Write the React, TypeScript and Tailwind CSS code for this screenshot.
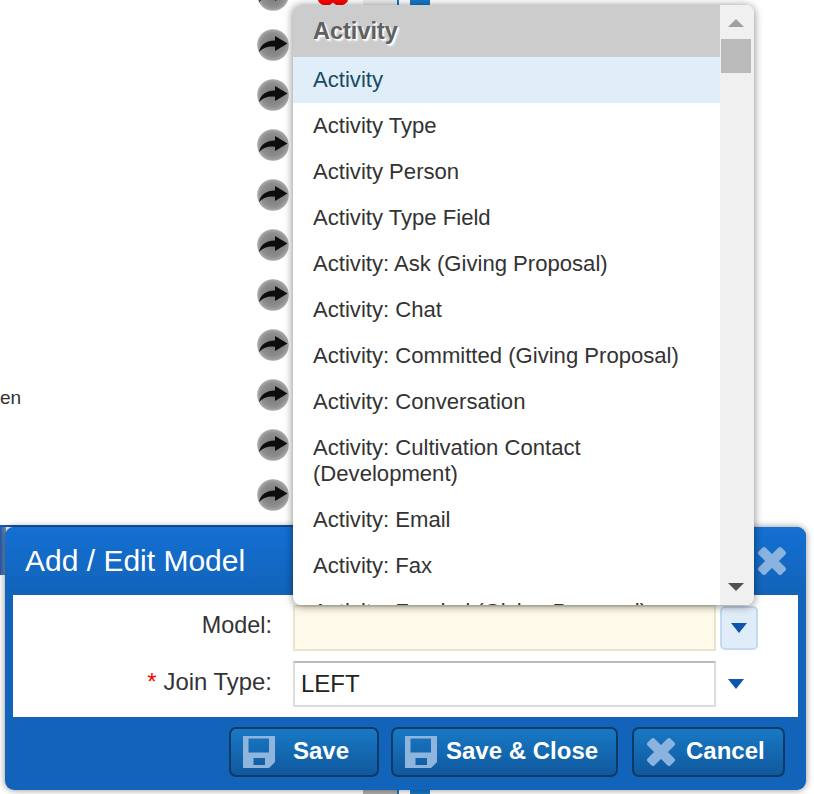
import { useId } from "react";

const items = [
  "Activity Type",
  "Activity Person",
  "Activity Type Field",
  "Activity: Ask (Giving Proposal)",
  "Activity: Chat",
  "Activity: Committed (Giving Proposal)",
  "Activity: Conversation",
  "Activity: Cultivation Contact (Development)",
  "Activity: Email",
  "Activity: Fax",
  "Activity: Funded (Giving Proposal)",
];

function ArrowBadge() {
  const id = useId();
  return (
    <svg width="34" height="34" viewBox="0 0 34 34" className="block">
      <defs>
        <radialGradient id={id + "g"} cx="50%" cy="50%" r="50%">
          <stop offset="0%" stopColor="#767676" />
          <stop offset="75%" stopColor="#8e8e8e" />
          <stop offset="100%" stopColor="#ababab" />
        </radialGradient>
        <filter id={id + "b"} x="-20%" y="-20%" width="140%" height="140%">
          <feGaussianBlur stdDeviation="0.7" />
        </filter>
      </defs>
      <circle cx="17" cy="17" r="15.8" fill={`url(#${id}g)`} filter={`url(#${id}b)`} />
      <path
        d="M3 24 C4.5 16.5 10.5 12.5 19 12.5 L19 8 L31.5 15.5 L19 23 L19 18.5 C12 18 7.5 19.5 3 24 Z"
        fill="#0c0c0c"
        filter={`url(#${id}b)`}
      />
    </svg>
  );
}

function SaveIcon() {
  return (
    <svg width="32" height="32" viewBox="0 0 32 32" className="block shrink-0">
      <path
        fillRule="evenodd"
        d="M0 0 H32 V26 L26 32 H0 Z M5.5 2.5 V16.5 H26 V2.5 Z M10.5 22 V29 H22 V22 Z"
        fill="#8fb5dc"
      />
    </svg>
  );
}

function CrossIcon() {
  return (
    <svg width="30" height="30" viewBox="0 0 30 30" className="block shrink-0">
      <path
        d="M7 3 L15 11 L23 3 L27 7 L19 15 L27 23 L23 27 L15 19 L7 27 L3 23 L11 15 L3 7 Z"
        fill="#8ab3df"
        stroke="#8ab3df"
        strokeWidth="4"
        strokeLinejoin="round"
      />
    </svg>
  );
}

function Tri({ className }: { className: string }) {
  return (
    <svg width="16" height="10" viewBox="0 0 16 10" className={"block " + className}>
      <path d="M0 0 H16 L8 10 Z" fill="currentColor" />
    </svg>
  );
}

function ModalButton({
  width,
  icon,
  label,
  gap,
}: {
  width: string;
  icon: React.ReactNode;
  label: string;
  gap: string;
}) {
  return (
    <button
      className={`flex h-[50px] items-center rounded-[7px] border-2 border-[#0e3a66] bg-gradient-to-b from-[#1879c5] to-[#10589d] pl-3 text-[24px] font-bold text-white ${width} ${gap}`}
    >
      {icon}
      <span className="pb-[2px]">{label}</span>
    </button>
  );
}

export default function App() {
  const rows = Array.from({ length: 11 });
  return (
    <div className="relative h-[794px] w-[814px] overflow-hidden bg-white font-['Liberation_Sans',Arial,sans-serif] text-[#333]">
      {/* page behind the overlays */}
      <div className="flex h-full">
        <div className="flex w-[256px] flex-col pt-[385px]">
          <span className="text-[19px] leading-[26px] text-[#333]">en</span>
        </div>
        <div className="-mt-[22px] flex w-[62px] flex-col gap-[16px]">
          {rows.map((_, i) => (
            <ArrowBadge key={i} />
          ))}
        </div>
        <div className="w-[30px]">
          <svg width="30" height="6" viewBox="0 0 30 6" className="block">
            <path d="M0 0 H30 C29 4 24 6 20 5.5 C18 5.2 16 3.5 15 2.5 C14 3.5 12 5.2 10 5.5 C6 6 1 4 0 0 Z" fill="#f00" />
          </svg>
        </div>
        <div className="ml-[15px] w-[34px] bg-gradient-to-b from-[#eeeeee] to-[#b0b0b0]" />
        <div className="w-[2px] bg-[#1878c8]" />
        <div className="ml-[11px] w-[20px] bg-[#1878c8]" />
      </div>

      {/* band behind the modal's header */}
      <div className="absolute left-0 top-[525px] h-[2px] w-[300px] bg-[#1a54ae]" />
      <div className="absolute left-0 top-[527px] h-[48px] w-[6px] bg-gradient-to-r from-[#1a56b0] to-[#7f95ae]" />

      {/* modal */}
      <div className="absolute left-[5px] top-[527px] flex h-[263px] w-[801px] flex-col rounded-[9px] bg-[#1264bb] shadow-[0_0_7px_rgba(0,0,0,0.45)]">
        <div className="flex h-[68px] items-center justify-between rounded-t-[9px] bg-gradient-to-b from-[#1470d2] to-[#1263b9] pl-5 pr-[19px]">
          <span className="text-[30px] leading-none text-white">Add / Edit Model</span>
          <CrossIcon />
        </div>
        <div className="mx-2 flex h-[122px] w-[785px] flex-col gap-[10px] bg-white pt-[10px] text-[23.4px]">
          <div className="flex h-[46px] items-center">
            <label className="w-[259px] pb-[4px] text-right">Model:</label>
            <div className="ml-[21px] h-[46px] w-[423px] border-2 border-[#e9e5cb] bg-[#fef9e8]" />
            <div className="ml-1 flex h-[44px] w-[38px] items-center justify-center rounded-[5px] border-2 border-[#c4daf0] bg-[#e0edf9]">
              <Tri className="text-[#0f55ae]" />
            </div>
          </div>
          <div className="flex h-[46px] items-center">
            <label className="w-[259px] pb-[4px] text-right text-[23.9px]">
              <span className="mr-[7px] text-[#f00]">*</span>Join Type:
            </label>
            <div className="ml-[21px] flex h-[46px] w-[423px] items-center border-2 border-[#dcdcdc] border-t-[#bbbbbb] pl-[6px] text-[24px] text-[#222]">
              LEFT
            </div>
            <Tri className="ml-3 text-[#0f55ae]" />
          </div>
        </div>
        <div className="flex flex-1 items-center justify-end pr-[21px] pb-[3px]">
          <ModalButton width="w-[150px]" gap="gap-[18px]" icon={<SaveIcon />} label="Save" />
          <div className="w-3" />
          <ModalButton width="w-[227px]" gap="gap-[9px]" icon={<SaveIcon />} label="Save & Close" />
          <div className="w-[14px]" />
          <ModalButton width="w-[153px]" gap="gap-[10px]" icon={<CrossIcon />} label="Cancel" />
        </div>
      </div>

      {/* dropdown menu */}
      <div className="absolute left-[293px] top-[5px] flex h-[600px] w-[461px] overflow-hidden rounded-[8px] bg-white shadow-[0_1px_8px_rgba(0,0,0,0.5)]">
        <div className="w-[427px] text-[22.1px] leading-[26px]">
          <div className="flex h-[52px] items-center bg-[#cccccc] px-5 text-[23.5px] font-bold text-[#606060] [text-shadow:1px_1px_1px_#fff,2px_2px_2px_#fff]">
            Activity
          </div>
          <div className="bg-[#e0eefa] px-5 py-[10px] text-[#1b4a63]">Activity</div>
          {items.map((t) => (
            <div key={t} className="px-5 py-[10px] text-[#333]">
              {t}
            </div>
          ))}
        </div>
        <div className="flex w-[34px] flex-col items-center bg-[#f0f0f0] pr-[2px] pt-[14px]">
          <svg width="16" height="8" viewBox="0 0 16 8" className="block text-[#a0a0a0]">
            <path d="M8 0 L16 8 H0 Z" fill="currentColor" />
          </svg>
          <div className="mt-[12px] h-[34px] w-[30px] bg-[#bbbbbb]" />
          <svg width="16" height="8" viewBox="0 0 16 8" className="mt-[510px] block text-[#505050]">
            <path d="M0 0 H16 L8 8 Z" fill="currentColor" />
          </svg>
        </div>
      </div>
    </div>
  );
}
